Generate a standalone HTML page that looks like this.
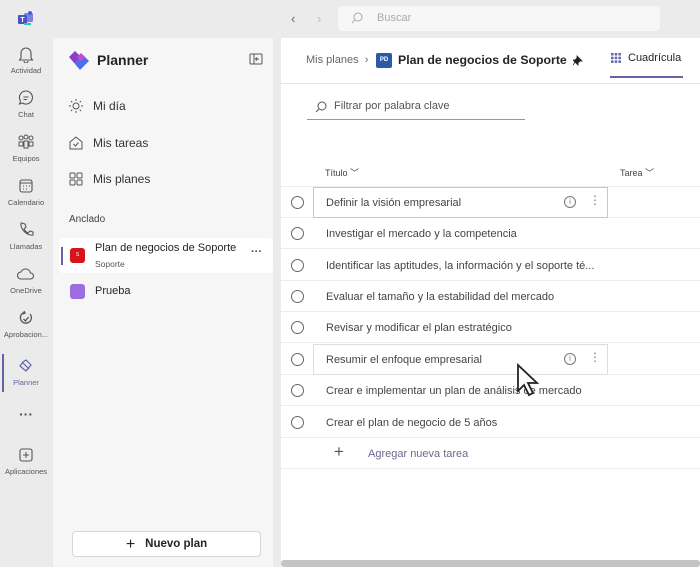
<!DOCTYPE html>
<html><head><meta charset="utf-8"><style>
*{margin:0;padding:0;box-sizing:border-box}
body{width:700px;height:567px;overflow:hidden;background:#ebebeb;font-family:"Liberation Sans",sans-serif;position:relative;color:#242424}
.abs{position:absolute}
.rail-item{position:absolute;left:0;width:52px;text-align:center;font-size:7.5px;color:#555}
.rail-item svg{display:block;margin:0 auto 3px}
#side{position:absolute;left:53px;top:38px;width:220px;height:529px;background:#f6f6f7;border-radius:4px 0 0 0}
.nav{position:absolute;left:16px;font-size:12px;color:#333;display:flex;align-items:center}
.nav svg{margin-right:10px}
#main{position:absolute;left:281px;top:38px;width:419px;height:529px;background:#fff}
.row{position:absolute;left:0;width:419px;height:31px;border-bottom:1px solid #ececec;font-size:11px;color:#444}
.row .c{position:absolute;left:10px;top:9px;width:13px;height:13px;border:1px solid #666;border-radius:50%}
.row .t{position:absolute;left:45px;top:10px}
.box{position:absolute;left:32px;top:0;width:295px;height:31px;border:1px solid #c8c8c8}
</style></head><body>
<svg class="abs" style="left:18px;top:11px" width="16" height="15" viewBox="0 0 16 15"><rect x="6" y="2" width="9" height="9" rx="1.5" fill="#7b83eb"/><rect x="0" y="4" width="9" height="9" rx="1" fill="#4b53bc"/><circle cx="12" cy="2" r="2" fill="#5059c9"/><rect x="6" y="12" width="7" height="2" fill="#2ec4b6"/><text x="4.5" y="11" font-size="7" fill="#fff" text-anchor="middle" font-family="Liberation Sans" font-weight="bold">T</text></svg>
<div class="abs" style="left:291px;top:11px;font-size:13px;color:#666">&#8249;</div>
<div class="abs" style="left:317px;top:11px;font-size:13px;color:#bbb">&#8250;</div>
<div class="abs" style="left:338px;top:6px;width:322px;height:25px;background:#f7f7f7;border-radius:4px"></div>
<svg class="abs" style="left:351px;top:12px" width="12" height="12" viewBox="0 0 12 12"><circle cx="7" cy="5" r="4" fill="none" stroke="#aaa" stroke-width="1"/><path d="M4 8L1 11" stroke="#aaa"/></svg>
<div class="abs" style="left:377px;top:12px;font-size:11px;color:#aaa">Buscar</div>

<div class="rail-item" style="top:45px"><svg width="16" height="18" viewBox="0 0 16 18"><path d="M3 13V8a5 5 0 0110 0v5l1.5 2h-13z M6 16a2 2 0 004 0" fill="none" stroke="#555" stroke-width="1.1"/></svg>Actividad</div>
<div class="rail-item" style="top:89px"><svg width="16" height="18" viewBox="0 0 16 18"><path d="M8 2a6.5 6.5 0 11-3.5 12L1.5 15l1-3A6.5 6.5 0 018 2z M5.5 8h5 M5.5 10.5h3.5" fill="none" stroke="#555" stroke-width="1.1"/></svg>Chat</div>
<div class="rail-item" style="top:133px"><svg width="18" height="18" viewBox="0 0 18 18"><circle cx="4" cy="5" r="2" fill="none" stroke="#555"/><circle cx="9" cy="4" r="2" fill="none" stroke="#555"/><circle cx="14" cy="5" r="2" fill="none" stroke="#555"/><path d="M2 9h4v4H2z M7 8h4v7H7z M12 9h4v4h-4z" fill="none" stroke="#555"/></svg>Equipos</div>
<div class="rail-item" style="top:177px"><svg width="16" height="18" viewBox="0 0 16 18"><rect x="2" y="3" width="12" height="12" rx="2" fill="none" stroke="#555" stroke-width="1.1"/><path d="M2 6h12" stroke="#555"/><path d="M5 9h1M8 9h1M11 9h1M5 12h1M8 12h1" stroke="#555"/></svg>Calendario</div>
<div class="rail-item" style="top:221px"><svg width="16" height="18" viewBox="0 0 16 18"><path d="M4 2l3 1 1 3-2 2c1 2 2 3 4 4l2-2 3 1 0 3c-6 1-13-6-12-12z" fill="none" stroke="#555" stroke-width="1.1"/></svg>Llamadas</div>
<div class="rail-item" style="top:265px"><svg width="18" height="18" viewBox="0 0 18 18"><path d="M4 14a3.5 3.5 0 010-7 5 5 0 019.5 1 3 3 0 010 6z" fill="none" stroke="#555" stroke-width="1.1"/></svg>OneDrive</div>
<div class="rail-item" style="top:309px"><svg width="16" height="18" viewBox="0 0 16 18"><path d="M12 5a5.5 5.5 0 11-6-1.5 M6 2l1 2-2 1 M5.5 10l2 2 3-4" fill="none" stroke="#555" stroke-width="1.3"/></svg>Aprobacion...</div>
<div class="abs" style="left:2px;top:354px;width:2px;height:38px;background:#6264a7"></div>
<div class="rail-item" style="top:357px;color:#6264a7"><svg width="18" height="18" viewBox="0 0 18 18"><path d="M9 3l5 5-5 6-6-5 3-4z M6 6l6 6" fill="none" stroke="#6264a7" stroke-width="1.2"/></svg>Planner</div>
<div class="rail-item" style="top:406px;font-size:14px;color:#555;font-weight:bold">···</div>
<div class="rail-item" style="top:446px"><svg width="16" height="18" viewBox="0 0 16 18"><rect x="2" y="3" width="12" height="12" rx="2" fill="none" stroke="#555" stroke-width="1.1"/><path d="M8 6v6M5 9h6" stroke="#555"/></svg>Aplicaciones</div>

<div id="side">
<svg class="abs" style="left:14px;top:11px" width="24" height="22" viewBox="0 0 24 22"><path d="M2 8l6-6 6 6-6 7z" fill="#8a3fc7"/><path d="M8 15l8-9 6 6-9 9z" fill="#4f6bed"/><path d="M10 8l4-4 4 4-4 4z" fill="#c04fd0"/></svg>
<div class="abs" style="left:44px;top:14px;font-size:14px;font-weight:bold">Planner</div>
<svg class="abs" style="left:196px;top:15px" width="14" height="12" viewBox="0 0 14 12"><rect x="1" y="1" width="12" height="10" rx="1" fill="none" stroke="#555"/><path d="M5 1v10 M10 6H7 M8 4.5L6.5 6 8 7.5" fill="none" stroke="#555"/></svg>
<div class="nav" style="top:61px"><svg width="14" height="14" viewBox="0 0 14 14"><circle cx="7" cy="7" r="3" fill="none" stroke="#555"/><path d="M7 0v2M7 12v2M0 7h2M12 7h2M2 2l1.3 1.3M10.7 10.7L12 12M2 12l1.3-1.3M10.7 3.3L12 2" stroke="#555"/></svg>Mi día</div>
<div class="nav" style="top:98px"><svg width="14" height="14" viewBox="0 0 14 14"><path d="M1 6l6-5 6 5v7H1z M4.5 8l2 2 3-3.5" fill="none" stroke="#555"/></svg>Mis tareas</div>
<div class="nav" style="top:134px"><svg width="14" height="14" viewBox="0 0 14 14"><rect x="1" y="1" width="5" height="5" rx="1" fill="none" stroke="#555"/><rect x="8" y="1" width="5" height="5" rx="1" fill="none" stroke="#555"/><rect x="1" y="8" width="5" height="5" rx="1" fill="none" stroke="#555"/><rect x="8" y="8" width="5" height="5" rx="1" fill="none" stroke="#555"/></svg>Mis planes</div>
<div class="abs" style="left:16px;top:176px;font-size:10px;color:#444">Anclado</div>
<div class="abs" style="left:6px;top:200px;width:214px;height:35px;background:#fff;border-radius:4px"></div>
<div class="abs" style="left:8px;top:209px;width:2px;height:18px;background:#6264a7"></div>
<div class="abs" style="left:17px;top:210px;width:15px;height:15px;background:#d7141c;border-radius:3px;color:#fff;font-size:5px;text-align:center;line-height:15px">S</div>
<div class="abs" style="left:42px;top:204px;font-size:11px">Plan de negocios de Soporte</div>
<div class="abs" style="left:42px;top:221px;font-size:8.5px;color:#555">Soporte</div>
<div class="abs" style="left:198px;top:208px;font-size:11px;color:#444;font-weight:bold">···</div>
<div class="abs" style="left:17px;top:246px;width:15px;height:15px;background:#9c6ee0;border-radius:3px"></div>
<div class="abs" style="left:42px;top:247px;font-size:11px">Prueba</div>
<div class="abs" style="left:19px;top:493px;width:189px;height:26px;background:#fff;border:1px solid #d6d6d6;border-radius:4px;text-align:center;font-size:11.5px;font-weight:bold;line-height:24px"><span style="font-weight:normal;font-size:16px;vertical-align:-2px;margin-right:10px">+</span>Nuevo plan</div>
</div>

<div id="main">
<div class="abs" style="left:0;top:0;width:419px;height:46px;border-bottom:1px solid #e6e6e6"></div>
<div class="abs" style="left:25px;top:16px;font-size:11px;color:#666">Mis planes &nbsp;›</div>
<div class="abs" style="left:95px;top:15px;width:16px;height:15px;background:#2b5aa8;border-radius:2px;color:#fff;font-size:6px;text-align:center;line-height:15px;font-weight:bold">PD</div>
<div class="abs" style="left:117px;top:15px;font-size:12.3px;font-weight:bold">Plan de negocios de Soporte</div>
<svg class="abs" style="left:292px;top:17px" width="10" height="11" viewBox="0 0 10 11"><path d="M4 1l5 5-2 0-2 2 0 2-5-5 2 0 2-2z M2 7L0 10" fill="#222" stroke="#222" stroke-width="0.8"/></svg>
<svg class="abs" style="left:330px;top:15px" width="10" height="10" viewBox="0 0 10 10" fill="#6264a7"><rect x="0" y="0" width="2.5" height="2.5"/><rect x="3.7" y="0" width="2.5" height="2.5"/><rect x="7.4" y="0" width="2.5" height="2.5"/><rect x="0" y="3.7" width="2.5" height="2.5"/><rect x="3.7" y="3.7" width="2.5" height="2.5"/><rect x="7.4" y="3.7" width="2.5" height="2.5"/><rect x="0" y="7.4" width="2.5" height="2.5"/><rect x="3.7" y="7.4" width="2.5" height="2.5"/><rect x="7.4" y="7.4" width="2.5" height="2.5"/></svg>
<div class="abs" style="left:347px;top:14px;font-size:11px">Cuadrícula</div>
<div class="abs" style="left:329px;top:38px;width:73px;height:2px;background:#6264a7"></div>
<svg class="abs" style="left:34px;top:63px" width="12" height="12" viewBox="0 0 12 12"><circle cx="7" cy="5" r="4" fill="none" stroke="#555"/><path d="M4 8L1 11" stroke="#555"/></svg>
<div class="abs" style="left:53px;top:62px;font-size:11px;color:#555">Filtrar por palabra clave</div>
<div class="abs" style="left:26px;top:81px;width:218px;height:1px;background:#999"></div>
<div class="abs" style="left:44px;top:128px;font-size:9px;color:#444">Título ﹀</div>
<div class="abs" style="left:339px;top:128px;font-size:9px;color:#444">Tarea ﹀</div>
<div class="abs" style="left:0;top:148px;width:419px;height:1px;background:#ececec"></div>

<div class="row" style="top:149px"><div class="box"></div><div class="c"></div><div class="t">Definir la visión empresarial</div><div class="abs" style="left:283px;top:9px;width:12px;height:12px;border:1px solid #777;border-radius:50%;font-size:8px;text-align:center;line-height:10px;color:#777">i</div><div class="abs" style="left:308px;top:6px;font-size:12px;color:#777">⋮</div></div>
<div class="row" style="top:180px"><div class="c"></div><div class="t">Investigar el mercado y la competencia</div></div>
<div class="row" style="top:212px"><div class="c"></div><div class="t">Identificar las aptitudes, la información y el soporte té...</div></div>
<div class="row" style="top:243px"><div class="c"></div><div class="t">Evaluar el tamaño y la estabilidad del mercado</div></div>
<div class="row" style="top:274px"><div class="c"></div><div class="t">Revisar y modificar el plan estratégico</div></div>
<div class="row" style="top:306px"><div class="box" style="border-color:#ddd"></div><div class="c"></div><div class="t">Resumir el enfoque empresarial</div><div class="abs" style="left:283px;top:9px;width:12px;height:12px;border:1px solid #777;border-radius:50%;font-size:8px;text-align:center;line-height:10px;color:#777">i</div><div class="abs" style="left:308px;top:6px;font-size:12px;color:#777">⋮</div></div>
<div class="row" style="top:337px"><div class="c"></div><div class="t">Crear e implementar un plan de análisis de mercado</div></div>
<div class="row" style="top:369px"><div class="c"></div><div class="t">Crear el plan de negocio de 5 años</div></div>
<div class="row" style="top:400px;border-bottom:1px solid #ececec"><div class="abs" style="left:53px;top:4px;font-size:17px;color:#555">+</div><div class="abs" style="left:87px;top:10px;color:#6b6b8f">Agregar nueva tarea</div></div>
<svg class="abs" style="left:235px;top:325px" width="24" height="36" viewBox="0 0 24 36"><path d="M2 2v26l6-6 5 10 4-2-5-10h9z" fill="#fff" stroke="#222" stroke-width="1.8"/></svg>
<div class="abs" style="left:0;top:522px;width:419px;height:7px;background:#c4c4c4;border-radius:3px"></div>
</div>
</body></html>
